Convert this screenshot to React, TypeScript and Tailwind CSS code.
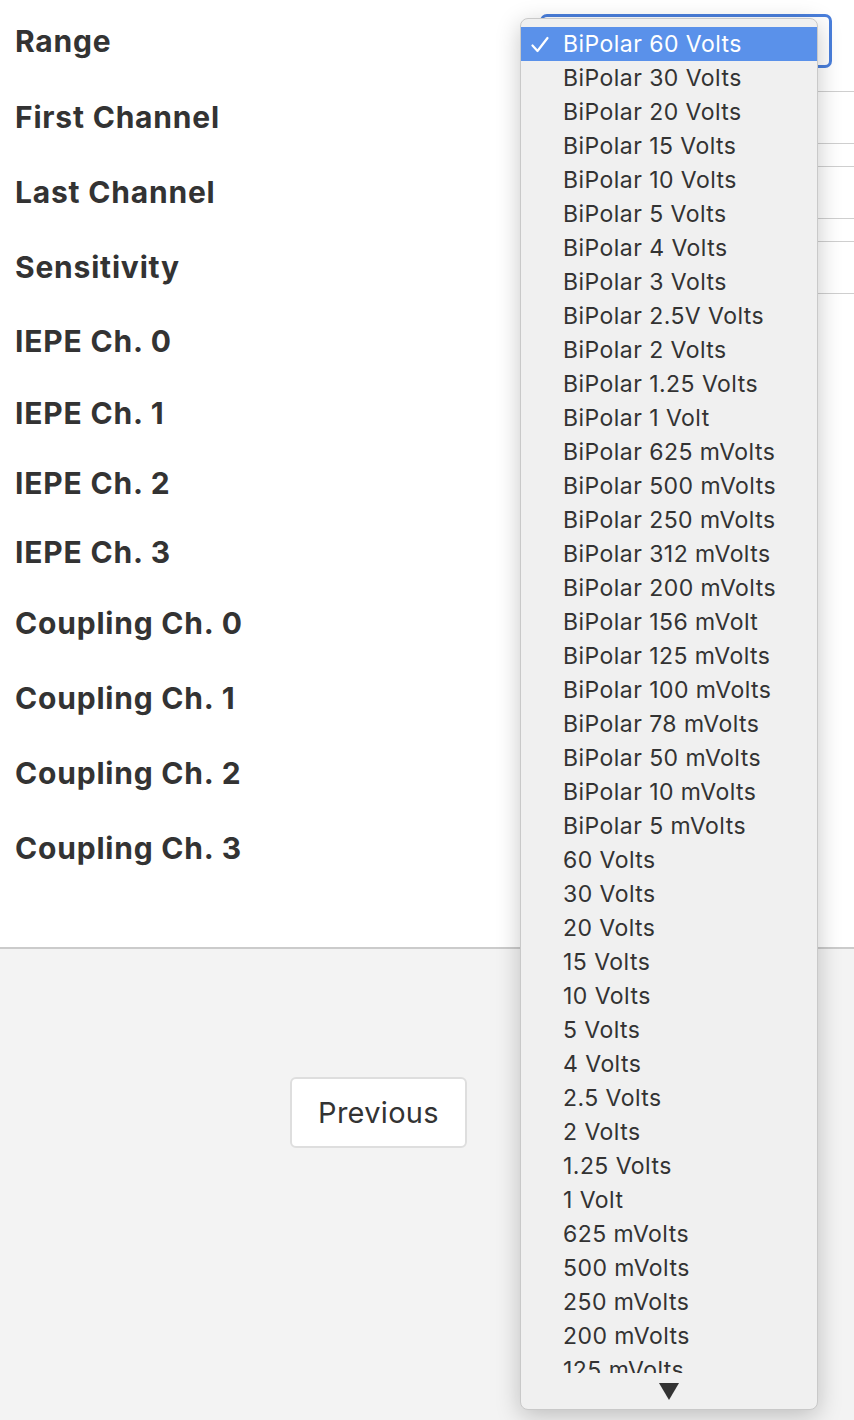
import React from "react";

const labels: { text: string; h: string }[] = [
  { text: "Range", h: "h-[76px]" },
  { text: "First Channel", h: "h-[76px]" },
  { text: "Last Channel", h: "h-[75px]" },
  { text: "Sensitivity", h: "h-[75px]" },
  { text: "IEPE Ch. 0", h: "h-[73px]" },
  { text: "IEPE Ch. 1", h: "h-[70px]" },
  { text: "IEPE Ch. 2", h: "h-[70px]" },
  { text: "IEPE Ch. 3", h: "h-[69px]" },
  { text: "Coupling Ch. 0", h: "h-[73px]" },
  { text: "Coupling Ch. 1", h: "h-[76px]" },
  { text: "Coupling Ch. 2", h: "h-[75px]" },
  { text: "Coupling Ch. 3", h: "h-[74px]" },
];

const options = [
  "BiPolar 60 Volts",
  "BiPolar 30 Volts",
  "BiPolar 20 Volts",
  "BiPolar 15 Volts",
  "BiPolar 10 Volts",
  "BiPolar 5 Volts",
  "BiPolar 4 Volts",
  "BiPolar 3 Volts",
  "BiPolar 2.5V Volts",
  "BiPolar 2 Volts",
  "BiPolar 1.25 Volts",
  "BiPolar 1 Volt",
  "BiPolar 625 mVolts",
  "BiPolar 500 mVolts",
  "BiPolar 250 mVolts",
  "BiPolar 312 mVolts",
  "BiPolar 200 mVolts",
  "BiPolar 156 mVolt",
  "BiPolar 125 mVolts",
  "BiPolar 100 mVolts",
  "BiPolar 78 mVolts",
  "BiPolar 50 mVolts",
  "BiPolar 10 mVolts",
  "BiPolar 5 mVolts",
  "60 Volts",
  "30 Volts",
  "20 Volts",
  "15 Volts",
  "10 Volts",
  "5 Volts",
  "4 Volts",
  "2.5 Volts",
  "2 Volts",
  "1.25 Volts",
  "1 Volt",
  "625 mVolts",
  "500 mVolts",
  "250 mVolts",
  "200 mVolts",
  "125 mVolts",
  "100 mVolts",
];

function Control({ index }: { index: number }) {
  if (index === 0) {
    return (
      <div className="h-[54px] w-[292px] rounded-[7px] border-[3px] border-[#4a7fdc] bg-white" />
    );
  }
  if (index <= 3) {
    return <div className="h-[53px] w-[340px] shrink-0 border border-[#cfcfcf] bg-white" />;
  }
  return null;
}

export default function App() {
  return (
    <div
      className="relative h-[1420px] w-[854px] overflow-hidden bg-[#f3f3f3] text-[#333333]"
      style={{ fontFamily: "Inter, 'Noto Sans', sans-serif" }}
    >
      <div className="border-b-2 border-[#cbcbcb] bg-white pb-[62px] pt-[3px]">
        {labels.map((l, i) => (
          <div key={l.text} className={`flex items-center ${l.h}`}>
            <div className="w-[540px] shrink-0 pl-[15px] text-[30px] font-bold tracking-[0.8px]">
              {l.text}
            </div>
            <Control index={i} />
          </div>
        ))}
      </div>

      <div className="pl-[290px] pt-[128px]">
        <button className="h-[71px] w-[177px] rounded-[6px] border-2 border-[#dedede] bg-white text-[29px] tracking-[0.3px] text-[#333]">
          Previous
        </button>
      </div>

      {/* open dropdown menu */}
      <div className="absolute left-[520px] top-[18px] flex h-[1392px] w-[298px] flex-col rounded-[8px] border border-[#c9c9c9] bg-[#f0f0f0] shadow-[0_6px_24px_rgba(0,0,0,0.22)]">
        <div className="mt-[8px] h-[1346px] overflow-hidden">
          {options.map((o, i) => (
            <div
              key={o}
              className={`flex h-[34px] items-center text-[23px] tracking-[0.45px] ${
                i === 0 ? "bg-[#5a91ea] text-white" : "text-[#333333]"
              }`}
            >
              <div className="flex w-[42px] shrink-0 justify-end pr-[14px]">
                {i === 0 && (
                  <svg width="18" height="17" viewBox="0 0 18 17" fill="none">
                    <path d="M1.5 9.5 L6.5 15 L16.5 2" stroke="white" strokeWidth="2.2" strokeLinecap="round" strokeLinejoin="round" />
                  </svg>
                )}
              </div>
              <span>{o}</span>
            </div>
          ))}
        </div>
        <div className="flex flex-1 items-center justify-center">
          <svg width="20" height="17" viewBox="0 0 20 17">
            <path d="M0 0 H20 L10 17 Z" fill="#333" />
          </svg>
        </div>
      </div>
    </div>
  );
}
